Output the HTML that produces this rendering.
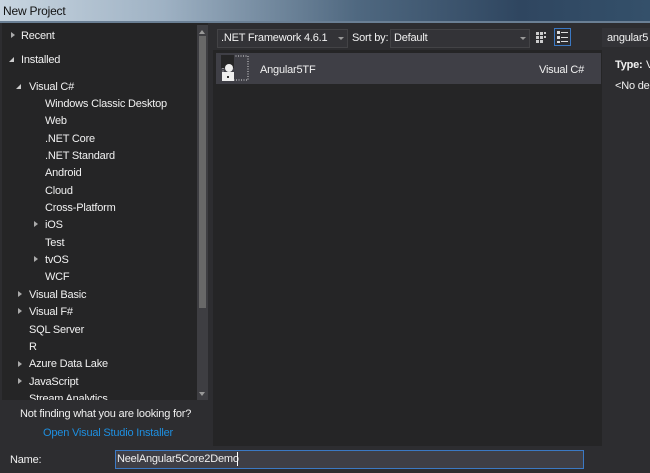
<!DOCTYPE html><html><head><style>
body{margin:0;width:650px;height:473px;overflow:hidden;background:#2d2d30;font-family:"Liberation Sans",sans-serif;font-size:11px;letter-spacing:-0.2px;color:#f1f1f1;position:relative}
.a{position:absolute}
.t{position:absolute;white-space:nowrap}
.tri{position:absolute;width:0;height:0}
</style></head><body>
<div class="a" style="left:0;top:0;width:650px;height:21px;background:linear-gradient(90deg,#c8d5e0 0%,#9fb2c4 25%,#4f6880 55%,#2f4660 80%,#34506a 100%)"></div>
<div class="t" style="left:3px;top:4px;color:#111;font-size:12px">New Project</div>
<div class="a" style="left:0;top:21px;width:650px;height:2px;background:#6a7f94"></div>
<div class="a" style="left:2px;top:23px;width:206px;height:377px;background:#252526"></div>
<div class="a" style="left:197px;top:25px;width:11px;height:375px;background:#3e3e42"></div>
<div class="a" style="left:199px;top:36px;width:7px;height:272px;background:#686868"></div>
<div class="tri" style="left:199px;top:30px;border:3px solid transparent;border-bottom:4px solid #999;border-top:0"></div>
<div class="tri" style="left:199px;top:392px;border:3px solid transparent;border-top:4px solid #999;border-bottom:0"></div>
<div class="t" style="left:21px;top:30px">Recent</div>
<div class="t" style="left:21px;top:54px">Installed</div>
<div class="t" style="left:29px;top:81px">Visual C#</div>
<div class="t" style="left:45px;top:98px">Windows Classic Desktop</div>
<div class="t" style="left:45px;top:115px">Web</div>
<div class="t" style="left:45px;top:133px">.NET Core</div>
<div class="t" style="left:45px;top:150px">.NET Standard</div>
<div class="t" style="left:45px;top:167px">Android</div>
<div class="t" style="left:45px;top:185px">Cloud</div>
<div class="t" style="left:45px;top:202px">Cross-Platform</div>
<div class="t" style="left:45px;top:219px">iOS</div>
<div class="t" style="left:45px;top:237px">Test</div>
<div class="t" style="left:45px;top:254px">tvOS</div>
<div class="t" style="left:45px;top:271px">WCF</div>
<div class="t" style="left:29px;top:289px">Visual Basic</div>
<div class="t" style="left:29px;top:306px">Visual F#</div>
<div class="t" style="left:29px;top:324px">SQL Server</div>
<div class="t" style="left:29px;top:341px">R</div>
<div class="t" style="left:29px;top:358px">Azure Data Lake</div>
<div class="t" style="left:29px;top:376px">JavaScript</div>
<div class="a" style="left:2px;top:393px;width:195px;height:7px;overflow:hidden"><div class="t" style="left:27px;top:0px">Stream Analytics</div></div>
<div class="tri" style="left:11px;top:32px;border:3px solid transparent;border-left:4px solid #aaa;border-right:0"></div>
<div class="tri" style="left:9px;top:57px;border-left:5px solid transparent;border-bottom:5px solid #ccc"></div>
<div class="tri" style="left:16px;top:84px;border-left:5px solid transparent;border-bottom:5px solid #ccc"></div>
<div class="tri" style="left:34px;top:221px;border:3px solid transparent;border-left:4px solid #aaa;border-right:0"></div>
<div class="tri" style="left:34px;top:256px;border:3px solid transparent;border-left:4px solid #aaa;border-right:0"></div>
<div class="tri" style="left:18px;top:291px;border:3px solid transparent;border-left:4px solid #aaa;border-right:0"></div>
<div class="tri" style="left:18px;top:308px;border:3px solid transparent;border-left:4px solid #aaa;border-right:0"></div>
<div class="tri" style="left:18px;top:361px;border:3px solid transparent;border-left:4px solid #aaa;border-right:0"></div>
<div class="tri" style="left:18px;top:378px;border:3px solid transparent;border-left:4px solid #aaa;border-right:0"></div>
<div class="t" style="left:20px;top:408px">Not finding what you are looking for?</div>
<div class="t" style="left:43px;top:427px;color:#1e8fe0">Open Visual Studio Installer</div>
<div class="a" style="left:217px;top:29px;width:129px;height:17px;background:#333337;border:1px solid #434346"></div>
<div class="t" style="left:221px;top:32px">.NET Framework 4.6.1</div>
<div class="tri" style="left:338px;top:37px;border:3px solid transparent;border-top:3px solid #999;border-bottom:0"></div>
<div class="t" style="left:352px;top:32px">Sort by:</div>
<div class="a" style="left:390px;top:29px;width:138px;height:17px;background:#333337;border:1px solid #434346"></div>
<div class="t" style="left:394px;top:32px">Default</div>
<div class="tri" style="left:520px;top:37px;border:3px solid transparent;border-top:3px solid #999;border-bottom:0"></div>
<svg class="a" style="left:534px;top:29px" width="16" height="18"><g fill="#ccc"><rect x="2" y="3" width="3" height="3"/><rect x="6" y="3" width="3" height="3"/><rect x="10" y="3" width="2" height="2"/><rect x="2" y="7" width="3" height="3"/><rect x="6" y="7" width="3" height="3"/><rect x="10" y="7" width="2" height="2"/><rect x="2" y="11" width="3" height="3"/><rect x="6" y="11" width="3" height="3"/></g></svg>
<div class="a" style="left:554px;top:28px;width:17px;height:18px;border:1px solid #3b79c4;box-sizing:border-box"></div>
<svg class="a" style="left:554px;top:28px" width="17" height="18"><g fill="#ddd"><rect x="3" y="3" width="3" height="3"/><rect x="7" y="4" width="7" height="1"/><rect x="3" y="8" width="3" height="3"/><rect x="7" y="9" width="7" height="1"/><rect x="3" y="13" width="3" height="2"/><rect x="7" y="13" width="7" height="1"/></g></svg>
<div class="a" style="left:602px;top:28px;width:48px;height:19px;background:#333337"></div>
<div class="t" style="left:607px;top:32px">angular5</div>
<div class="a" style="left:213px;top:50px;width:389px;height:396px;background:#252526"></div>
<div class="a" style="left:216px;top:53px;width:385px;height:31px;background:#3f3f46"></div>
<svg class="a" style="left:221px;top:55px" width="28" height="28"><rect x="2" y="1" width="25" height="24" fill="none" stroke="#ddd" stroke-dasharray="1,1.5"/><rect x="0" y="0" width="13" height="13" fill="#252526"/><circle cx="8" cy="13" r="4" fill="#eee"/><rect x="1" y="17" width="12" height="9" fill="#eee"/><rect x="6" y="21" width="2" height="2" fill="#333"/></svg>
<div class="t" style="left:260px;top:64px">Angular5TF</div>
<div class="t" style="left:539px;top:64px">Visual C#</div>
<div class="t" style="left:615px;top:59px;font-weight:bold">Type:</div>
<div class="t" style="left:646px;top:59px">V</div>
<div class="t" style="left:615px;top:80px">&lt;No de</div>
<div class="a" style="left:0;top:447px;width:650px;height:26px;background:#2d2d30"></div>
<div class="t" style="left:10px;top:454px">Name:</div>
<div class="a" style="left:115px;top:450px;width:467px;height:17px;background:#3f3f46;border:1px solid #3b79c4"></div>
<div class="t" style="left:117px;top:453px">NeelAngular5Core2Demo</div>
<div class="a" style="left:237px;top:452px;width:1px;height:14px;background:#fff"></div>
</body></html>
